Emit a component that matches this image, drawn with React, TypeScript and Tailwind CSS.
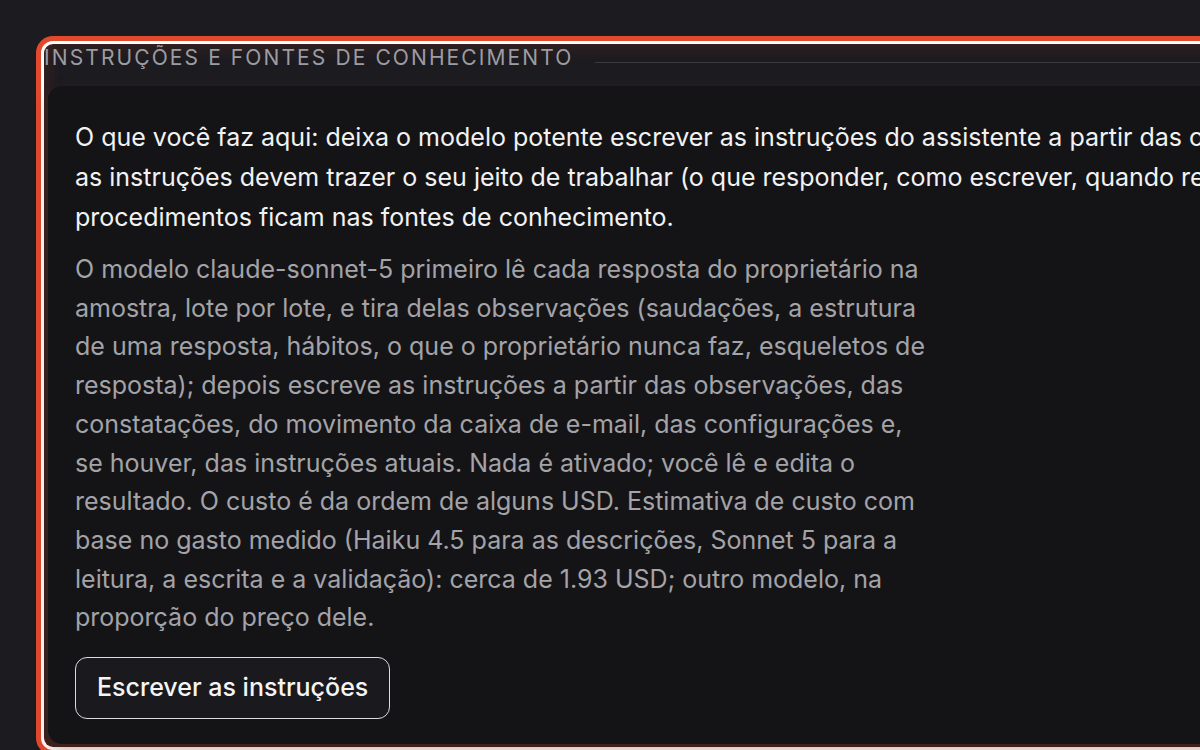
import React from 'react';

export default function App() {
  return (
    <div className="h-[750px] w-[1200px] overflow-hidden bg-[#1c1c20] font-['Inter','Noto_Sans',sans-serif]">
      <div className="pl-[44px] pt-[44px]">
        {/* Focused section with orange focus ring */}
        <section className="w-[1400px] h-[703px] rounded-[9px] shadow-[0_0_0_3px_#ffffff,0_0_0_8px_#e2492d,inset_0_0_18px_rgba(226,73,45,0.22)]">
          <div className="flex items-center h-[28px]">
            <h2 className="text-[21px] leading-[28px] tracking-[0.1em] uppercase text-[#9c9ca3] font-normal whitespace-nowrap">
              Instruções e fontes de conhecimento
            </h2>
            <div className="flex-1 h-px bg-[#3a3a41] ml-[22px] mt-[8px]" />
          </div>

          <div className="mt-[14px] ml-[4px] h-[658px] rounded-[14px] bg-[#141417] pl-[27px] pt-[31px] shadow-[0_6px_14px_rgba(120,40,20,0.35)]">
            <p className="text-[25px] leading-[40px] text-[#f2f2f3]">
              <span className="block whitespace-nowrap">
                O que você faz aqui: deixa o modelo potente escrever as instruções do assistente a partir das observações e da amostra;
              </span>
              <span className="block whitespace-nowrap">
                as instruções devem trazer o seu jeito de trabalhar (o que responder, como escrever, quando recusar), enquanto fatos e
              </span>
              <span className="block whitespace-nowrap">procedimentos ficam nas fontes de conhecimento.</span>
            </p>

            <p className="mt-[13px] max-w-[860px] text-[25px] leading-[38.7px] text-[#a3a3a8]">
              O modelo claude-sonnet-5 primeiro lê cada resposta do proprietário na amostra, lote por lote, e tira delas
              observações (saudações, a estrutura de uma resposta, hábitos, o que o proprietário nunca faz, esqueletos de
              resposta); depois escreve as instruções a partir das observações, das constatações, do movimento da caixa de
              e-mail, das configurações e, se houver, das instruções atuais. Nada é ativado; você lê e edita o resultado. O
              custo é da ordem de alguns USD. Estimativa de custo com base no gasto medido (Haiku 4.5 para as descrições,
              Sonnet 5 para a leitura, a escrita e a validação): cerca de 1.93 USD; outro modelo, na proporção do preço dele.
            </p>

            <button
              type="button"
              className="mt-[20px] h-[62px] px-[21px] rounded-[12px] border-[1.5px] border-[#dcdce0] bg-[#1a1a1e] text-[25px] font-medium text-[#f4f4f5]"
            >
              Escrever as instruções
            </button>
          </div>
        </section>
      </div>
    </div>
  );
}
